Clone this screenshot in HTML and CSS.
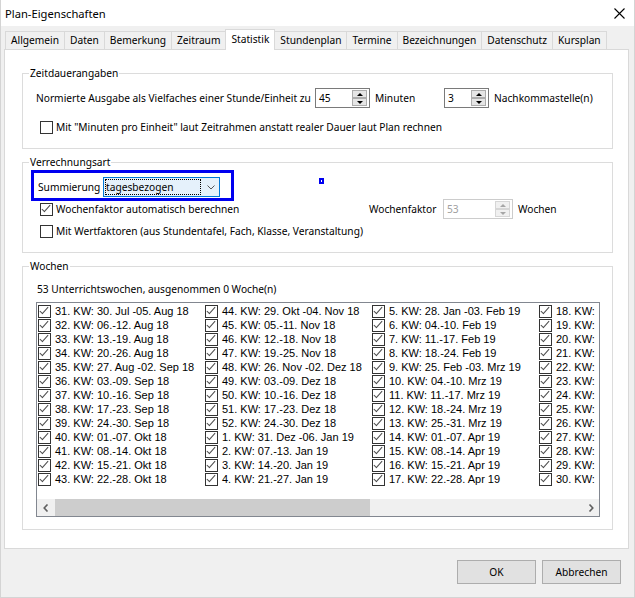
FILE: index.html
```html
<!DOCTYPE html>
<html lang="de">
<head>
<meta charset="utf-8">
<title>Plan-Eigenschaften</title>
<link rel="stylesheet" href="styles.css">
</head>
<body>
<div class="window">
  <div class="titlebar">
    <span class="title">Plan-Eigenschaften</span>
    <svg class="close" width="11" height="11" viewBox="0 0 11 11"><path d="M0.5 0.5L10.5 10.5M10.5 0.5L0.5 10.5" stroke="#000" stroke-width="1.1" fill="none"/></svg>
  </div>
  <div class="main">
    <div class="tabs">
      <div class="tab">Allgemein</div>
      <div class="tab">Daten</div>
      <div class="tab">Bemerkung</div>
      <div class="tab">Zeitraum</div>
      <div class="tab active">Statistik</div>
      <div class="tab">Stundenplan</div>
      <div class="tab">Termine</div>
      <div class="tab">Bezeichnungen</div>
      <div class="tab">Datenschutz</div>
      <div class="tab">Kursplan</div>
    </div>
    <div class="panel">
      <div class="group g1">
        <div class="group-title">Zeitdauerangaben</div>
        <div class="row r-spin">
          <span class="lbl lbl-norm">Normierte Ausgabe als Vielfaches einer Stunde/Einheit zu</span>
          <div class="spin spin-45"><span>45</span><span class="spin-btns"><span class="sb up"></span><span class="sb down"></span></span></div>
          <span class="lbl lbl-min">Minuten</span>
          <div class="spin spin-3"><span>3</span><span class="spin-btns"><span class="sb up"></span><span class="sb down"></span></span></div>
          <span class="lbl lbl-dec">Nachkommastelle(n)</span>
        </div>
        <div class="row chk-row r-min"><span class="cb"></span><span>Mit "Minuten pro Einheit" laut Zeitrahmen anstatt realer Dauer laut Plan rechnen</span></div>
      </div>

      <div class="group g2">
        <div class="group-title">Verrechnungsart</div>
        <div class="hl">
          <span class="lbl lbl-sum">Summierung</span>
          <div class="combo">
            <span class="combo-val">tagesbezogen</span>
            <svg class="chev" width="8" height="5" viewBox="0 0 8 5"><path d="M0.5 0.5L4 4L7.5 0.5" stroke="#555" fill="none"/></svg>
          </div>
        </div>
        <span class="marker"></span>
        <div class="row chk-row r-wf">
          <span class="wf-left"><span class="cb on"></span><span>Wochenfaktor automatisch berechnen</span></span>
          <span class="lbl lbl-wf">Wochenfaktor</span>
          <div class="spin spin-53 dis"><span>53</span><span class="spin-btns"><span class="sb up"></span><span class="sb down"></span></span></div>
          <span class="lbl lbl-wo">Wochen</span>
        </div>
        <div class="row chk-row r-wert"><span class="cb"></span><span>Mit Wertfaktoren (aus Stundentafel, Fach, Klasse, Veranstaltung)</span></div>
      </div>

      <div class="group g3">
        <div class="group-title">Wochen</div>
        <div class="info">53 Unterrichtswochen, ausgenommen 0 Woche(n)</div>
        <div class="listbox">
          <div class="items">
            <div class="item"><span class="cb on"></span>31. KW: 30. Jul -05. Aug 18</div>
            <div class="item"><span class="cb on"></span>32. KW: 06.-12. Aug 18</div>
            <div class="item"><span class="cb on"></span>33. KW: 13.-19. Aug 18</div>
            <div class="item"><span class="cb on"></span>34. KW: 20.-26. Aug 18</div>
            <div class="item"><span class="cb on"></span>35. KW: 27. Aug -02. Sep 18</div>
            <div class="item"><span class="cb on"></span>36. KW: 03.-09. Sep 18</div>
            <div class="item"><span class="cb on"></span>37. KW: 10.-16. Sep 18</div>
            <div class="item"><span class="cb on"></span>38. KW: 17.-23. Sep 18</div>
            <div class="item"><span class="cb on"></span>39. KW: 24.-30. Sep 18</div>
            <div class="item"><span class="cb on"></span>40. KW: 01.-07. Okt 18</div>
            <div class="item"><span class="cb on"></span>41. KW: 08.-14. Okt 18</div>
            <div class="item"><span class="cb on"></span>42. KW: 15.-21. Okt 18</div>
            <div class="item"><span class="cb on"></span>43. KW: 22.-28. Okt 18</div>

            <div class="item"><span class="cb on"></span>44. KW: 29. Okt -04. Nov 18</div>
            <div class="item"><span class="cb on"></span>45. KW: 05.-11. Nov 18</div>
            <div class="item"><span class="cb on"></span>46. KW: 12.-18. Nov 18</div>
            <div class="item"><span class="cb on"></span>47. KW: 19.-25. Nov 18</div>
            <div class="item"><span class="cb on"></span>48. KW: 26. Nov -02. Dez 18</div>
            <div class="item"><span class="cb on"></span>49. KW: 03.-09. Dez 18</div>
            <div class="item"><span class="cb on"></span>50. KW: 10.-16. Dez 18</div>
            <div class="item"><span class="cb on"></span>51. KW: 17.-23. Dez 18</div>
            <div class="item"><span class="cb on"></span>52. KW: 24.-30. Dez 18</div>
            <div class="item"><span class="cb on"></span>1. KW: 31. Dez -06. Jan 19</div>
            <div class="item"><span class="cb on"></span>2. KW: 07.-13. Jan 19</div>
            <div class="item"><span class="cb on"></span>3. KW: 14.-20. Jan 19</div>
            <div class="item"><span class="cb on"></span>4. KW: 21.-27. Jan 19</div>

            <div class="item"><span class="cb on"></span>5. KW: 28. Jan -03. Feb 19</div>
            <div class="item"><span class="cb on"></span>6. KW: 04.-10. Feb 19</div>
            <div class="item"><span class="cb on"></span>7. KW: 11.-17. Feb 19</div>
            <div class="item"><span class="cb on"></span>8. KW: 18.-24. Feb 19</div>
            <div class="item"><span class="cb on"></span>9. KW: 25. Feb -03. Mrz 19</div>
            <div class="item"><span class="cb on"></span>10. KW: 04.-10. Mrz 19</div>
            <div class="item"><span class="cb on"></span>11. KW: 11.-17. Mrz 19</div>
            <div class="item"><span class="cb on"></span>12. KW: 18.-24. Mrz 19</div>
            <div class="item"><span class="cb on"></span>13. KW: 25.-31. Mrz 19</div>
            <div class="item"><span class="cb on"></span>14. KW: 01.-07. Apr 19</div>
            <div class="item"><span class="cb on"></span>15. KW: 08.-14. Apr 19</div>
            <div class="item"><span class="cb on"></span>16. KW: 15.-21. Apr 19</div>
            <div class="item"><span class="cb on"></span>17. KW: 22.-28. Apr 19</div>

            <div class="item"><span class="cb on"></span>18. KW:</div>
            <div class="item"><span class="cb on"></span>19. KW:</div>
            <div class="item"><span class="cb on"></span>20. KW:</div>
            <div class="item"><span class="cb on"></span>21. KW:</div>
            <div class="item"><span class="cb on"></span>22. KW:</div>
            <div class="item"><span class="cb on"></span>23. KW:</div>
            <div class="item"><span class="cb on"></span>24. KW:</div>
            <div class="item"><span class="cb on"></span>25. KW:</div>
            <div class="item"><span class="cb on"></span>26. KW:</div>
            <div class="item"><span class="cb on"></span>27. KW:</div>
            <div class="item"><span class="cb on"></span>28. KW:</div>
            <div class="item"><span class="cb on"></span>29. KW:</div>
            <div class="item"><span class="cb on"></span>30. KW:</div>
          </div>
          <div class="hscroll">
            <span class="arrow"><svg width="6" height="8" viewBox="0 0 6 8"><path d="M4.5 0.5L1.2 4L4.5 7.5" stroke="#606060" stroke-width="1.6" fill="none"/></svg></span>
            <span class="thumb"></span>
            <span class="track"></span>
            <span class="arrow"><svg width="6" height="8" viewBox="0 0 6 8"><path d="M1.5 0.5L4.8 4L1.5 7.5" stroke="#606060" stroke-width="1.6" fill="none"/></svg></span>
          </div>
        </div>
      </div>
    </div>
    <div class="footer">
      <button class="btn">OK</button>
      <button class="btn">Abbrechen</button>
    </div>
  </div>
</div>
</body>
</html>
```
FILE: styles.css
```css
* { box-sizing: border-box; }

body {
  margin: 0;
  background: #f0f0f0;
  font-family: "Noto Sans", "Open Sans", sans-serif;
  font-size: 10.2px;
  color: #000;
}

.window {
  width: 635px;
  height: 598px;
  border: 1px solid #d4d4d4;
  border-top: 0;
  background: #f0f0f0;
  display: flex;
  flex-direction: column;
}

.titlebar {
  height: 26px;
  flex: none;
  background: #fff;
  display: flex;
  align-items: center;
  justify-content: space-between;
  padding: 0 9px 0 4px;
}

.title { font-size: 11.2px; }

.main {
  flex: 1;
  padding: 3px 5px 0 3px;
  display: flex;
  flex-direction: column;
}

/* tabs */
.tabs {
  display: flex;
  align-items: flex-start;
  height: 21px;
  margin-bottom: -1px;
  padding-left: 1px;
  position: relative;
  z-index: 1;
}

.tab {
  height: 18px;
  margin-top: 2px;
  border: 1px solid #d9d9d9;
  border-bottom: 0;
  padding: 0 5px;
  line-height: 17px;
  background: #f0f0f0;
  white-space: nowrap;
}

.tab + .tab { margin-left: -1px; }

.tab.active {
  height: 21px;
  margin-top: 0;
  background: #fff;
  line-height: 19px;
  position: relative;
}

/* panel */
.panel {
  height: 500px;
  flex: none;
  border: 1px solid #d9d9d9;
  background: #fff;
  padding: 23px 15px 0 17px;
}

.group {
  border: 1px solid #dcdcdc;
  position: relative;
}

.group + .group { margin-top: 13px; }

.group-title {
  margin: -8px 0 0 6px;
  padding: 0 1px;
  width: max-content;
  background: #fff;
  line-height: 14px;
}

.row {
  display: flex;
  align-items: center;
  white-space: nowrap;
}

.g1 { padding-bottom: 13px; }
.g2 { padding-bottom: 13px; }
.g3 { padding-bottom: 12px; }

.r-spin {
  height: 20px;
  margin-top: 8px;
  padding-left: 13px;
}

.lbl-norm { width: 279px; }
.lbl-min { margin-left: 5px; width: 69px; }
.lbl-dec { margin-left: 5px; }

/* spin boxes */
.spin {
  height: 20px;
  border: 1px solid #7a7a7a;
  background: #fff;
  display: flex;
  align-items: center;
  justify-content: space-between;
  padding: 0 1px 0 3px;
}

.spin-45 { width: 55px; }
.spin-3 { width: 45px; }
.spin-53 { width: 70px; }

.spin-btns {
  display: flex;
  flex-direction: column;
  width: 15px;
  margin-right: 1px;
}

.sb {
  height: 8px;
  border: 1px solid #acacac;
  background: #e5e5e5;
  display: flex;
  align-items: center;
  justify-content: center;
}

.sb::before {
  content: "";
  border-left: 3px solid transparent;
  border-right: 3px solid transparent;
}

.up::before { border-bottom: 3px solid #000; }
.down::before { border-top: 3px solid #000; }

.spin.dis {
  border-color: #cccccc;
  color: #a0a0a0;
}

.dis .sb {
  border-color: #d6d6d6;
  background: #f0f0f0;
}

.dis .up::before { border-bottom-color: #a6a6a6; }
.dis .down::before { border-top-color: #a6a6a6; }

/* checkboxes */
.chk-row {
  padding-left: 17px;
  gap: 3px;
}

.r-min { height: 16px; margin-top: 11px; }

.cb {
  width: 13px;
  height: 13px;
  flex: none;
  border: 1px solid #333;
  background: #fff;
  position: relative;
}

.cb.on::after {
  content: "";
  position: absolute;
  left: 3px;
  top: -1px;
  width: 3px;
  height: 8px;
  border: solid #4d4d4d;
  border-width: 0 1px 1px 0;
  transform: rotate(42deg);
}

/* Verrechnungsart */
.hl {
  margin: 1px 0 0 8px;
  width: 203px;
  height: 31px;
  border: 3px solid #0000f0;
  display: flex;
  align-items: center;
  padding: 4px 0 1px 4px;
}

.lbl-sum { width: 65px; }

.combo {
  width: 117px;
  height: 20px;
  border: 1px solid #0078d7;
  background: #e5f1fb;
  display: flex;
  align-items: center;
  padding-left: 1px;
}

.combo-val {
  width: 96px;
  height: 16px;
  border: 1px dotted #000;
  line-height: 14px;
  padding-left: 0;
}

.chev { margin-left: 6px; }

.marker {
  position: absolute;
  left: 296px;
  top: 15px;
  width: 5px;
  height: 6px;
  border: 2px solid #0000f0;
  background: #fff;
}

.r-wf {
  height: 20px;
  margin-top: -2px;
  gap: 0;
}

.wf-left {
  display: flex;
  align-items: center;
  gap: 3px;
  width: 329px;
}

.lbl-wf { width: 74px; }
.lbl-wo { margin-left: 5px; }

.r-wert { height: 16px; margin-top: 4px; }

/* Wochen */
.info {
  margin-top: 8px;
  padding-left: 14px;
  line-height: 16px;
}

.listbox {
  margin: 5px 0 0 13px;
  width: 564px;
  height: 215px;
  border: 1px solid #828790;
  background: #fff;
  display: flex;
  flex-direction: column;
}

.items {
  flex: 1;
  overflow: hidden;
  display: grid;
  grid-auto-flow: column;
  grid-template-rows: repeat(13, 14px);
  grid-auto-columns: 167px;
  align-content: start;
  padding: 1px 0 0 1px;
  font-family: "Liberation Sans", Arial, sans-serif;
  font-size: 11px;
}

.item {
  display: flex;
  align-items: center;
  gap: 4px;
  white-space: nowrap;
}

.hscroll {
  height: 17px;
  flex: none;
  display: flex;
  background: #f0f0f0;
}

.arrow {
  width: 17px;
  display: flex;
  align-items: center;
  justify-content: center;
}

.thumb {
  width: 315px;
  margin-left: 1px;
  background: #cdcdcd;
}

.track { flex: 1; }

/* footer */
.footer {
  display: flex;
  justify-content: flex-end;
  gap: 6px;
  padding: 11px 8px 0 0;
}

.btn {
  width: 79px;
  height: 24px;
  border: 1px solid #adadad;
  background: #e1e1e1;
  font-family: inherit;
  font-size: 10.2px;
  color: #000;
  padding: 0;
}
```
